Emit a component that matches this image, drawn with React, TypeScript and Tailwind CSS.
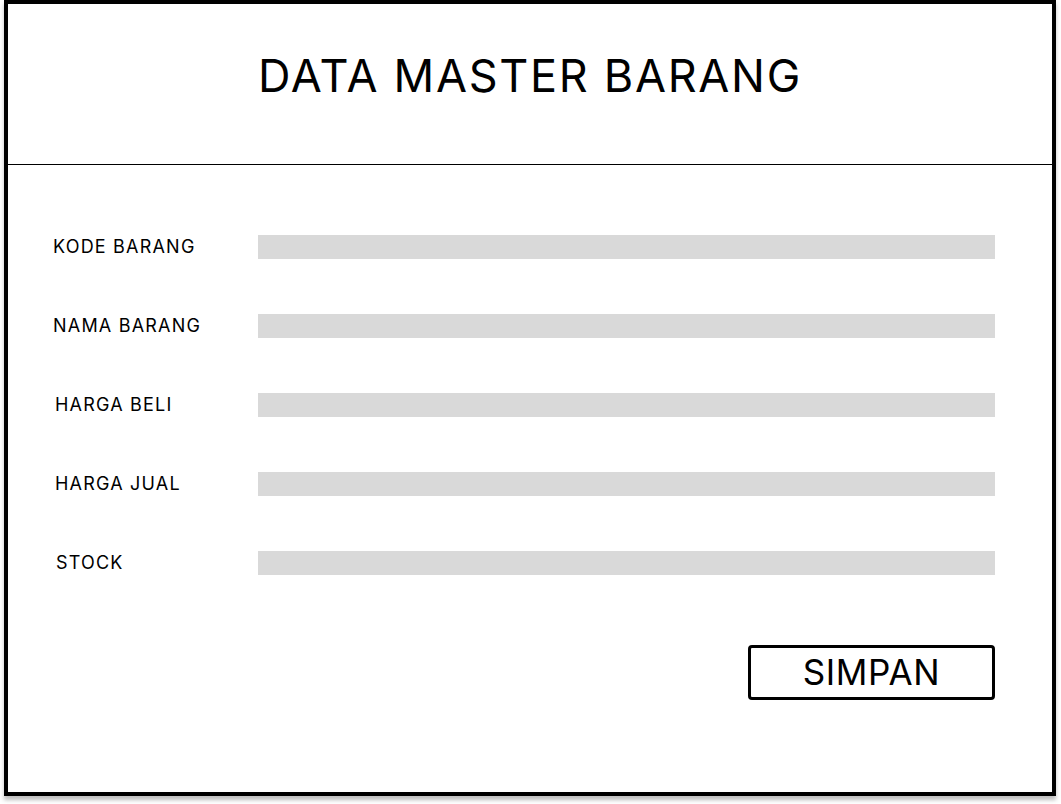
const fields = [
  { label: 'KODE BARANG', pad: 'pl-0' },
  { label: 'NAMA BARANG', pad: 'pl-0' },
  { label: 'HARGA BELI', pad: 'pl-[2px]' },
  { label: 'HARGA JUAL', pad: 'pl-[2px]' },
  { label: 'STOCK', pad: 'pl-[3px]' }
]

export default function App() {
  return (
    <div className="w-[1061px] h-[804px] bg-white font-['Inter',sans-serif] text-black">
      <div className="ml-[4px] w-[1052px] h-[796px] border-4 border-black bg-white shadow-[0_4px_4px_rgba(0,0,0,0.25)] flex flex-col">
        {/* header */}
        <div className="h-[161px] shrink-0 border-b border-black flex items-center justify-center">
          <h1 className="text-[45px] leading-none tracking-[1.7px] pb-[18px]">DATA MASTER BARANG</h1>
        </div>

        {/* form */}
        <div className="flex flex-col pt-[70px] pl-[45px] pr-[57px]">
          <div className="flex flex-col gap-[55px]">
            {fields.map((f) => (
              <div key={f.label} className="flex items-center h-[24px]">
                <div className={`w-[205px] text-[18px] leading-none tracking-[1.2px] ${f.pad}`}>{f.label}</div>
                <div className="flex-1 h-[24px] bg-[#d9d9d9]" />
              </div>
            ))}
          </div>

          <div className="flex justify-end mt-[70px]">
            <button className="w-[247px] h-[55px] border-[3px] border-black rounded-[4px] text-[35px] leading-none tracking-[0.6px] bg-white">
              SIMPAN
            </button>
          </div>
        </div>
      </div>
    </div>
  )
}
